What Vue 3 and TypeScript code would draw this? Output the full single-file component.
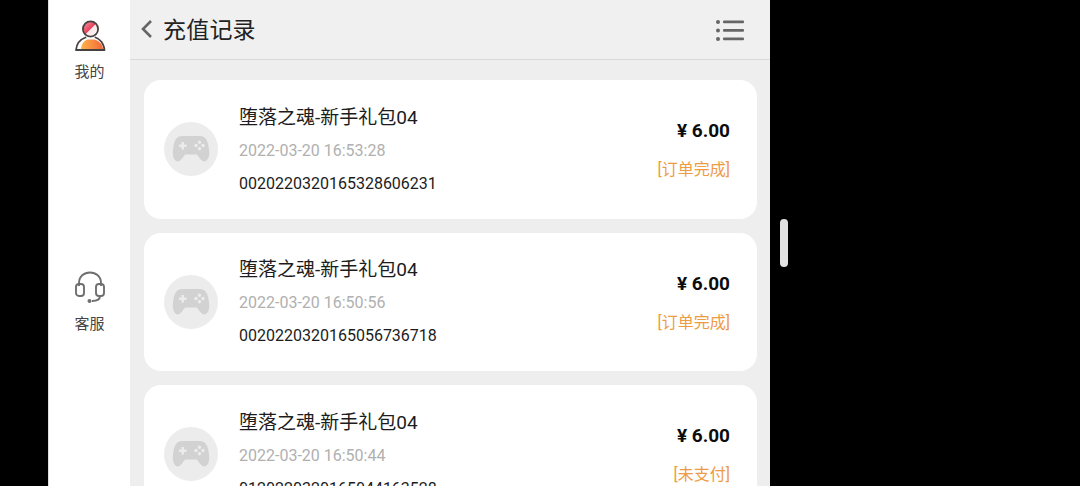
<script setup lang="ts">
interface Order {
  title: string
  time: string
  no: string
  price: string
  status: string
}

const orders: Order[] = [
  { title: '堕落之魂-新手礼包04', time: '2022-03-20 16:53:28', no: '002022032016532860623​1'.replace('\u200b', ''), price: '6.00', status: '[订单完成]' },
  { title: '堕落之魂-新手礼包04', time: '2022-03-20 16:50:56', no: '002022032016505673671​8'.replace('\u200b', ''), price: '6.00', status: '[订单完成]' },
  { title: '堕落之魂-新手礼包04', time: '2022-03-20 16:50:44', no: '012022032016504416352​8'.replace('\u200b', ''), price: '6.00', status: '[未支付]' }
]
</script>

<template>
  <div class="screen">
    <aside class="side">
      <div class="nav-item first">
        <svg class="nav-icon" width="34" height="34" viewBox="0 0 34 34">
          <defs>
            <linearGradient id="body" x1="0" y1="0" x2="1" y2="0">
              <stop offset="0" stop-color="#ffb347" />
              <stop offset="1" stop-color="#f2683c" />
            </linearGradient>
            <linearGradient id="head" x1="0" y1="0" x2="1" y2="1">
              <stop offset="0" stop-color="#f4a0a8" />
              <stop offset="0.5" stop-color="#e8405a" />
              <stop offset="0.52" stop-color="#fbe4e6" />
              <stop offset="1" stop-color="#ffffff" />
            </linearGradient>
          </defs>
          <path d="M8 32 C8 26 11 22.5 15 21.5 H21 C26 22.5 30 26 30 32 Z" fill="url(#body)" />
          <circle cx="17.5" cy="11" r="7.6" fill="url(#head)" stroke="#47413f" stroke-width="1.8" />
          <path d="M12.5 19.5 C7 21.5 3.5 26 3 32 H31.5 C31 26 27.5 21.5 22.5 19.5" fill="none" stroke="#47413f" stroke-width="1.8" stroke-linecap="round" stroke-linejoin="round" stroke-dasharray="17 0" />
        </svg>
        <span>我的</span>
      </div>
      <div class="nav-item second">
        <svg class="nav-icon" width="34" height="34" viewBox="0 0 34 34" fill="none" stroke="#6f6f6f" stroke-width="1.9">
          <path d="M6 16 V13 C6 6.5 11 2.5 17 2.5 C23 2.5 28 6.5 28 13 V16" />
          <rect x="3" y="14" width="8" height="12" rx="3" />
          <rect x="23" y="14" width="8" height="12" rx="3" />
          <path d="M27 26 C27 29.5 24 31 19 31" />
          <circle cx="16.5" cy="31" r="2" fill="#6f6f6f" stroke="none" />
        </svg>
        <span>客服</span>
      </div>
    </aside>

    <main class="main">
      <header class="bar">
        <svg class="back" width="14" height="20" viewBox="0 0 14 20" fill="none" stroke="#666" stroke-width="2.6">
          <path d="M11 2 L3 10 L11 18" />
        </svg>
        <h1>充值记录</h1>
        <svg class="menu" width="30" height="24" viewBox="0 0 30 24" fill="#666">
          <circle cx="3" cy="3" r="2" />
          <circle cx="3" cy="11.5" r="2" />
          <circle cx="3" cy="20" r="2" />
          <rect x="8" y="1.6" width="21" height="2.6" rx="1" />
          <rect x="8" y="10.1" width="21" height="2.6" rx="1" />
          <rect x="8" y="18.6" width="21" height="2.6" rx="1" />
        </svg>
      </header>

      <section class="list">
        <article v-for="o in orders" :key="o.no" class="card">
          <div class="avatar">
            <svg width="38" height="28" viewBox="0 0 38 28">
              <path fill="#d2d2d2" fill-rule="evenodd" d="M10 1 H28 C33 1 35.5 5 36.5 11 C37.5 17 38 23 34 26 C30.5 28 27.5 23 25 19.5 H13 C10.5 23 7.5 28 4 26 C0 23 0.5 17 1.500 11 C2.500 5 5 1 10 1 Z M9.500 7 H12 V9.500 H14.500 V12 H12 V14.500 H9.500 V12 H7 V9.500 H9.500 Z M27.500 5.500 A1.700 1.700 0 1 0 27.500 8.900 A1.700 1.700 0 1 0 27.500 5.500 Z M27.500 12 A1.700 1.700 0 1 0 27.500 15.400 A1.700 1.700 0 1 0 27.500 12 Z M24 8.800 A1.700 1.700 0 1 0 24 12.200 A1.700 1.700 0 1 0 24 8.800 Z M31 8.800 A1.700 1.700 0 1 0 31 12.200 A1.700 1.700 0 1 0 31 8.800 Z" />
            </svg>
          </div>
          <div class="info">
            <div class="title">{{ o.title }}</div>
            <div class="time">{{ o.time }}</div>
            <div class="no">{{ o.no }}</div>
          </div>
          <div class="right">
            <div class="price">¥ {{ o.price }}</div>
            <div class="status">{{ o.status }}</div>
          </div>
        </article>
      </section>
    </main>

    <div class="rail"><div class="thumb"></div></div>
  </div>
</template>

<style scoped>
.screen {
  display: flex;
  height: 486px;
  width: 1080px;
  padding-left: 48px;
  box-sizing: border-box;
  overflow: hidden;
  background: #000;
  font-family: Roboto, "Noto Sans CJK SC", sans-serif;
}

.side {
  width: 82px;
  flex: none;
  background: #fff;
  border-left: 1px solid #dcdcdc;
  box-sizing: border-box;
  display: flex;
  flex-direction: column;
  align-items: center;
}

.nav-item {
  display: flex;
  flex-direction: column;
  align-items: center;
  font-size: 15px;
  line-height: 20px;
  color: #444;
}

.nav-item.first { margin-top: 18px; }
.nav-item.second { margin-top: 188px; }
.nav-icon { display: block; margin-bottom: 10px; }

.main {
  width: 640px;
  flex: none;
  background: #eee;
}

.bar {
  height: 60px;
  box-sizing: border-box;
  background: #f0f0f0;
  border-bottom: 1px solid #d9d9d9;
  display: flex;
  align-items: center;
  padding: 0 25px 1px 10px;
}

.back { flex: none; }

.bar h1 {
  margin: 0 0 3px 9px;
  font-size: 23px;
  font-weight: 400;
  color: #222;
  flex: 1;
  letter-spacing: 0.2px;
}

.menu { margin-top: 4px; }

.list {
  padding: 20px 13px 0 14px;
  display: flex;
  flex-direction: column;
  gap: 14px;
}

.card {
  flex: none;
  height: 138.5px;
  background: #fff;
  border-radius: 17px;
  display: flex;
  align-items: center;
  padding: 0 27px 0 20px;
}

.avatar {
  width: 54px;
  height: 54px;
  border-radius: 50%;
  background: #ececec;
  display: flex;
  align-items: center;
  justify-content: center;
  flex: none;
}

.info {
  flex: 1;
  margin-left: 21px;
}

.title {
  font-size: 19px;
  line-height: 26px;
  color: #1c1c1c;
}

.time {
  font-size: 16px;
  line-height: 20px;
  margin-top: 10px;
  color: #b0b0b0;
}

.no {
  font-size: 16px;
  line-height: 20px;
  margin-top: 13px;
  color: #1c1c1c;
}

.right {
  text-align: right;
  flex: none;
}

.price {
  font-size: 19px;
  line-height: 24px;
  font-weight: 700;
  color: #0c0c0c;
  margin-top: 2px;
}

.status {
  font-size: 16px;
  line-height: 22px;
  margin-top: 16px;
  color: #ed9c43;
}

.rail {
  padding: 219px 0 0 10px;
}

.thumb {
  width: 8px;
  height: 48px;
  border-radius: 4px;
  background: #e2e2e2;
}
</style>

<style>
body { background: #000; }
</style>
